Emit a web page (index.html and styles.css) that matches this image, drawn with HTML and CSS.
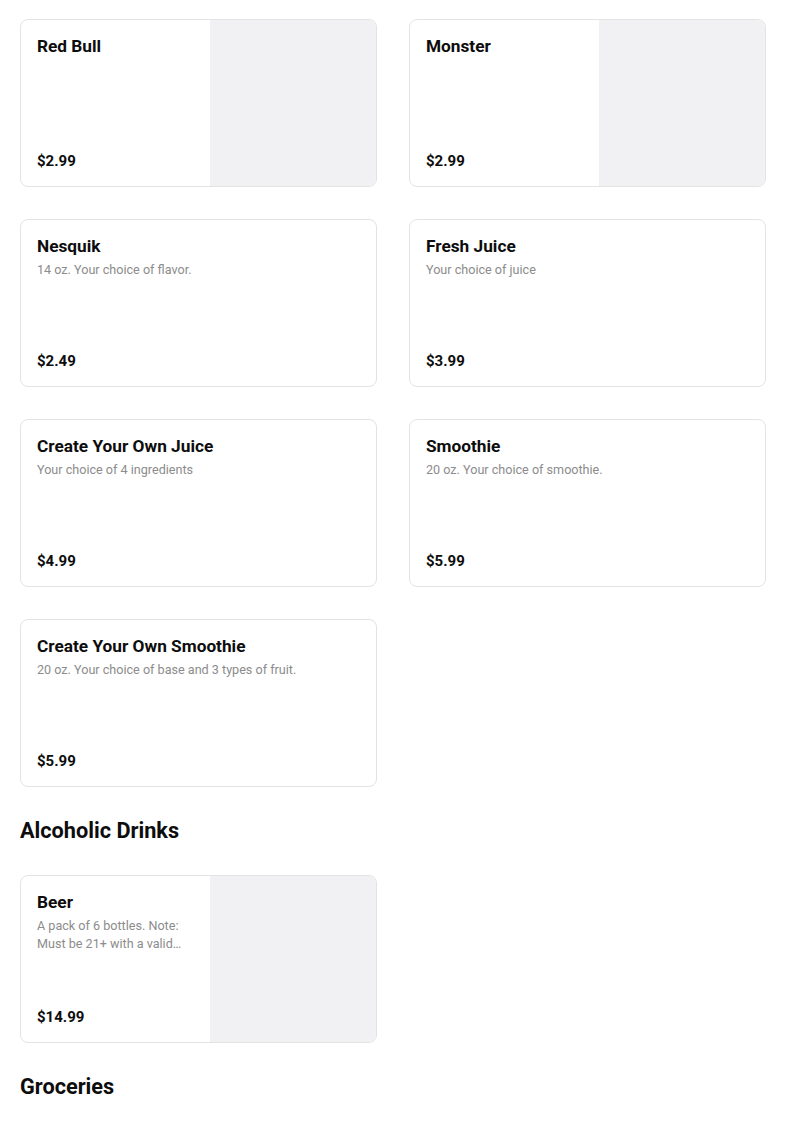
FILE: index.html
```html
<!DOCTYPE html>
<html lang="en">
<head>
<meta charset="utf-8">
<title>Menu</title>
<link rel="stylesheet" href="styles.css">
</head>
<body>
<main class="menu">
  <section class="grid">
    <article class="card">
      <div class="card-body">
        <h3 class="title">Red Bull</h3>
        <div class="price">$2.99</div>
      </div>
      <div class="card-img"></div>
    </article>
    <article class="card">
      <div class="card-body">
        <h3 class="title">Monster</h3>
        <div class="price">$2.99</div>
      </div>
      <div class="card-img"></div>
    </article>
    <article class="card">
      <div class="card-body">
        <h3 class="title">Nesquik</h3>
        <p class="desc">14 oz. Your choice of flavor.</p>
        <div class="price">$2.49</div>
      </div>
    </article>
    <article class="card">
      <div class="card-body">
        <h3 class="title">Fresh Juice</h3>
        <p class="desc">Your choice of juice</p>
        <div class="price">$3.99</div>
      </div>
    </article>
    <article class="card">
      <div class="card-body">
        <h3 class="title">Create Your Own Juice</h3>
        <p class="desc">Your choice of 4 ingredients</p>
        <div class="price">$4.99</div>
      </div>
    </article>
    <article class="card">
      <div class="card-body">
        <h3 class="title">Smoothie</h3>
        <p class="desc">20 oz. Your choice of smoothie.</p>
        <div class="price">$5.99</div>
      </div>
    </article>
    <article class="card">
      <div class="card-body">
        <h3 class="title">Create Your Own Smoothie</h3>
        <p class="desc">20 oz. Your choice of base and 3 types of fruit.</p>
        <div class="price">$5.99</div>
      </div>
    </article>
  </section>

  <h2 class="section-title">Alcoholic Drinks</h2>
  <section class="grid">
    <article class="card">
      <div class="card-body">
        <h3 class="title">Beer</h3>
        <p class="desc">A pack of 6 bottles. Note: Must be 21+ with a valid…</p>
        <div class="price">$14.99</div>
      </div>
      <div class="card-img"></div>
    </article>
  </section>

  <h2 class="section-title">Groceries</h2>
</main>
</body>
</html>
```

FILE: styles.css
```css
* { box-sizing: border-box; }

html, body {
  margin: 0;
  padding: 0;
  background: #ffffff;
}

body {
  font-family: Roboto, "Liberation Sans", Arial, sans-serif;
  color: #111111;
}

.menu {
  padding: 19px 20px 40px 20px;
}

.grid {
  display: grid;
  grid-template-columns: 357px 357px;
  column-gap: 32px;
  row-gap: 32px;
}

.card {
  display: flex;
  height: 168px;
  border: 1px solid #e3e3e3;
  border-radius: 8px;
  overflow: hidden;
  background: #ffffff;
}

.card-body {
  flex: 1;
  min-width: 0;
  display: flex;
  flex-direction: column;
  padding: 16px 16px 15px 16px;
}

.title {
  margin: 0;
  font-size: 17.25px;
  line-height: 20px;
  font-weight: 700;
  color: #0d0d0d;
}

.desc {
  margin: 5px 0 0;
  font-size: 12.6px;
  line-height: 18px;
  color: #8c8c8c;
}

.price {
  margin-top: auto;
  font-size: 15px;
  line-height: 20px;
  font-weight: 700;
  color: #0d0d0d;
}

.card-img {
  width: 166px;
  flex: none;
  background: #f1f1f3;
}

.section-title {
  margin: 33px 0 33px;
  font-size: 21.7px;
  line-height: 22px;
  font-weight: 700;
  color: #0d0d0d;
}
```
